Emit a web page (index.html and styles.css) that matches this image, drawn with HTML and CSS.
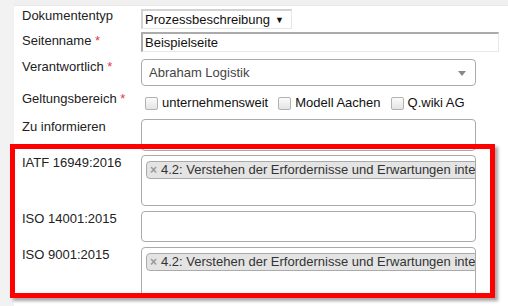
FILE: index.html
```html
<!DOCTYPE html>
<html lang="de">
<head>
  <meta charset="UTF-8" />
  <title>Seiteneigenschaften</title>
  <link rel="stylesheet" href="styles.css">
</head>
<body>
  <div class="page">
    <form class="panel">
      <div class="row row-type">
        <label class="lbl">Dokumententyp</label>
        <div class="native-select">
          <span>Prozessbeschreibung</span>
          <span class="caret">▼</span>
        </div>
      </div>

      <div class="row row-name">
        <label class="lbl">Seitenname <span class="req">*</span></label>
        <div class="native-input">Beispielseite</div>
      </div>

      <div class="row row-owner">
        <label class="lbl">Verantwortlich <span class="req">*</span></label>
        <div class="select2">
          <span class="select2-text">Abraham Logistik</span>
          <span class="select2-arrow"></span>
        </div>
      </div>

      <div class="row row-scope">
        <label class="lbl">Geltungsbereich <span class="req">*</span></label>
        <div class="options">
          <span class="opt"><span class="cb"></span>unternehmensweit</span>
          <span class="opt"><span class="cb"></span>Modell Aachen</span>
          <span class="opt"><span class="cb"></span>Q.wiki AG</span>
        </div>
      </div>

      <div class="row row-inform">
        <label class="lbl">Zu informieren</label>
        <div class="tagbox short"></div>
      </div>

      <div class="row row-norm">
        <label class="lbl">IATF 16949:2016</label>
        <div class="tagbox tall">
          <span class="chip"><span class="chip-x">×</span>4.2: Verstehen der Erfordernisse und Erwartungen interessierter Parteien</span>
        </div>
      </div>

      <div class="row row-norm">
        <label class="lbl">ISO 14001:2015</label>
        <div class="tagbox short"></div>
      </div>

      <div class="row row-norm">
        <label class="lbl">ISO 9001:2015</label>
        <div class="tagbox tall">
          <span class="chip"><span class="chip-x">×</span>4.2: Verstehen der Erfordernisse und Erwartungen interessierter Parteien</span>
        </div>
      </div>
    </form>

    <!-- annotation frame -->
    <div class="highlight"></div>
  </div>
</body>
</html>
```

FILE: styles.css
```css
body {
  margin: 0;
  background: #f2f2f2;
  font-family: "Liberation Sans", Arial, sans-serif;
  font-size: 13px;
  line-height: 16px;
  color: #333;
  overflow: hidden;
}

.page {
  position: relative;
  width: 508px;
  height: 306px;
}

.panel {
  margin: 0 0 0 14px;
  padding: 3px 0 0 8px;
  height: 306px;
  box-sizing: border-box;
  background: #fff;
  border-top: 5px solid #f0f0f0;
  box-shadow: inset 0 1px 0 #e6e6e6;
}

.row {
  display: grid;
  grid-template-columns: 119px 1fr;
  align-items: start;
}

.lbl {
  color: #222;
}

.req {
  color: #e23a3a;
}

/* Dokumententyp */
.row-type {
  margin-bottom: 3px;
}

.native-select {
  display: flex;
  align-items: center;
  margin-top: 1px;
  width: 151px;
  height: 20px;
  box-sizing: border-box;
  padding: 0 7px 0 2px;
  border: 1px solid #e6e6e6;
  border-top: 2px solid #d2d2d2;
  border-left: 2px solid #d2d2d2;
  color: #111;
}

.caret {
  margin-left: auto;
  font-size: 9px;
  color: #111;
}

/* Seitenname */
.row-name {
  margin-bottom: 7px;
}

.row-name .lbl {
  padding-top: 1px;
}

.native-input {
  width: 358px;
  height: 20px;
  box-sizing: border-box;
  padding: 0 2px;
  border-top: 2px solid #ababab;
  border-left: 2px solid #ababab;
  border-right: 1px solid #e8e8e8;
  border-bottom: 1px solid #e8e8e8;
  color: #111;
  line-height: 17px;
}

/* Verantwortlich */
.row-owner {
  margin-bottom: 5px;
}

.select2 {
  position: relative;
  width: 335px;
  height: 27px;
  box-sizing: border-box;
  border: 1px solid #aaa;
  border-radius: 4px;
  padding-left: 7px;
  line-height: 26px;
  color: #444;
}

.select2-arrow {
  position: absolute;
  right: 9px;
  top: 11px;
  border-top: 5px solid #888;
  border-left: 4px solid transparent;
  border-right: 4px solid transparent;
}

/* Geltungsbereich */
.row-scope {
  margin-bottom: 8px;
}

.options {
  display: flex;
  gap: 10px;
  padding: 4px 0 0 4px;
  color: #111;
}

.opt {
  display: flex;
  align-items: center;
  gap: 4px;
}

.cb {
  width: 11px;
  height: 11px;
  border: 1px solid #b2b2b2;
  border-radius: 2px;
  background: linear-gradient(#fbfbfb, #e4e4e4);
}

/* tag boxes */
.row-inform {
  margin-bottom: 4px;
}

.row-norm {
  margin-bottom: 5px;
}

.tagbox {
  width: 335px;
  box-sizing: border-box;
  border: 1px solid #aaa;
  border-radius: 4px;
  overflow: hidden;
  white-space: nowrap;
  padding: 5px 0 0 4px;
}

.tagbox.short {
  height: 31px;
}

.row-inform .tagbox.short {
  height: 32px;
}

.tagbox.tall {
  height: 51px;
}

.chip {
  display: inline-block;
  padding: 0 5px 0 3px;
  border: 1px solid #aaa;
  border-radius: 4px;
  background: #e4e4e4;
  color: #333;
}

.chip-x {
  display: inline-block;
  margin-right: 4px;
  font-size: 12px;
  font-weight: bold;
  color: #999;
}

/* red annotation */
.highlight {
  position: absolute;
  left: 10px;
  top: 144px;
  width: 485px;
  height: 154px;
  box-sizing: border-box;
  border: 5px solid #ff0000;
  box-shadow: 3px 3px 3px rgba(0,0,0,0.35);
  pointer-events: none;
}
```
